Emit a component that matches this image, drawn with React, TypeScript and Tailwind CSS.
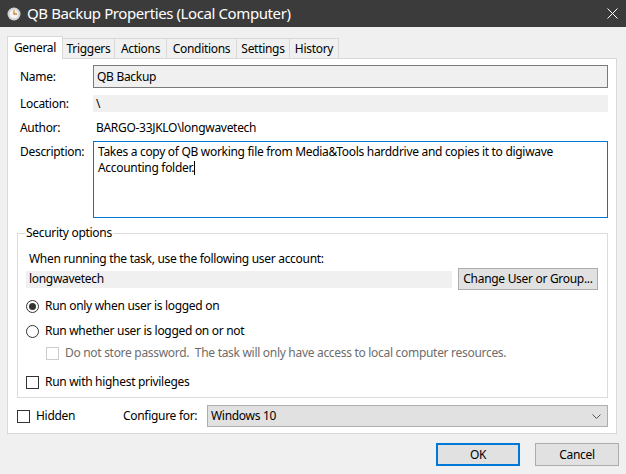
import React from 'react';

const font = { fontFamily: '"Segoe UI", "Noto Sans", sans-serif' };

const tabs = ['General', 'Triggers', 'Actions', 'Conditions', 'Settings', 'History'];
const tabWidths = ['w-[56px]', 'w-[52px]', 'w-[52px]', 'w-[70px]', 'w-[53px]', 'w-[49px]'];

const Radio = ({ checked }: { checked: boolean }) => (
  <span className="w-[13px] h-[13px] rounded-full border border-[#333333] bg-white flex items-center justify-center shrink-0">
    {checked ? <span className="w-[7px] h-[7px] rounded-full bg-[#333333]"></span> : <></>}
  </span>
);

const Check = ({ disabled }: { disabled?: boolean }) => (
  <span
    className={
      disabled
        ? 'w-[13px] h-[13px] border border-[#cccccc] bg-white shrink-0'
        : 'w-[13px] h-[13px] border border-[#333333] bg-white shrink-0'
    }
  ></span>
);

const App = (): React.ReactElement => {
  return (
    <div
      className="w-[626px] h-[474px] bg-[#f0f0f0] text-[12px] tracking-[-0.3px] text-black overflow-hidden"
      style={font}
    >
      {/* title bar */}
      <div className="h-[27px] bg-[#3b3b3b] flex items-center text-white">
        <svg width="14" height="14" viewBox="0 0 14 14" className="ml-[7px]">
          <circle cx="7" cy="7" r="6.5" fill="#d8d8d8" />
          <circle cx="7" cy="7" r="5" fill="#f4f4f4" stroke="#b8b8b8" strokeWidth="0.6" />
          <path d="M7 3.2 V7 H10" stroke="#c28a2a" strokeWidth="1.3" fill="none" />
        </svg>
        <span className="ml-[6px] text-[15px] leading-none tracking-[-0.4px]">QB Backup Properties (Local Computer)</span>
        <svg width="11" height="11" viewBox="0 0 11 11" className="ml-auto mr-[8px]">
          <path d="M0.5 0.5 L10.5 10.5 M10.5 0.5 L0.5 10.5" stroke="#ffffff" strokeWidth="1" />
        </svg>
      </div>

      <div className="px-[7px] pt-[9px]">
        {/* tabs */}
        <div className="flex items-end h-[22px]">
          {tabs.map((t, i) =>
            i === 0 ? (
              <div
                key={t}
                className={`${tabWidths[i]} h-[23px] -mb-px bg-white border border-b-0 border-[#d9d9d9] flex items-center justify-center relative z-10`}
              >
                {t}
              </div>
            ) : (
              <div
                key={t}
                className={`${tabWidths[i]} h-[20px] bg-[#f0f0f0] border border-b-0 border-l-0 border-[#d9d9d9] flex items-center justify-center pt-[1px]`}
              >
                {t}
              </div>
            ),
          )}
        </div>

        {/* panel */}
        <div className="w-[610px] h-[376px] bg-white border border-[#d9d9d9] pl-[12px] pr-[8px] pt-[6px]">
          <div className="flex items-center h-[23px]">
            <span className="w-[73px]">Name:</span>
            <div className="flex-1 h-[23px] border border-[#7a7a7a] bg-[#f0f0f0] flex items-center pl-[3px]">QB Backup</div>
          </div>
          <div className="flex items-center h-[17px] mt-[7px]">
            <span className="w-[73px]">Location:</span>
            <div className="flex-1 h-[17px] bg-[#f0f0f0] flex items-center pl-[3px]">\</div>
          </div>
          <div className="flex items-center h-[18px] mt-[7px]">
            <span className="w-[73px]">Author:</span>
            <span className="pl-[3px]">BARGO-33JKLO\longwavetech</span>
          </div>
          <div className="flex items-start mt-[4px]">
            <span className="w-[73px] pt-[2px]">Description:</span>
            <div className="flex-1 h-[77px] border border-[#0078d7] px-[4px] pt-[2px] leading-[16px]">
              Takes a copy of QB working file from Media&amp;Tools harddrive and copies it to digiwave Accounting folder.
              <span className="inline-block w-px h-[14px] bg-black align-middle -mt-[2px]"></span>
            </div>
          </div>

          {/* security options */}
          <fieldset className="ml-[-3px] mt-[7px] h-[173px] border border-[#dcdcdc] pl-[8px] pr-[9px]">
            <legend className="ml-[-1px] px-[1px] leading-[16px]">Security options</legend>
            <div className="ml-[3px] mt-[10px] h-[16px] flex items-center">When running the task, use the following user account:</div>
            <div className="flex items-center mt-[1px] h-[22px]">
              <div className="w-[426px] h-[17px] bg-[#f0f0f0] flex items-center pl-[3px]">longwavetech</div>
              <div className="ml-[6px] w-[140px] h-[22px] bg-[#e1e1e1] border border-[#adadad] flex items-center justify-center">
                Change User or Group...
              </div>
            </div>
            <div className="flex items-center gap-[6px] mt-[8px] h-[16px]">
              <Radio checked={true} />
              <span>Run only when user is logged on</span>
            </div>
            <div className="flex items-center gap-[6px] mt-[9px] h-[16px]">
              <Radio checked={false} />
              <span>Run whether user is logged on or not</span>
            </div>
            <div className="flex items-center gap-[6px] mt-[6px] h-[16px] ml-[20px] text-[#6d6d6d]">
              <Check disabled />
              <span className="whitespace-pre">Do not store password.  The task will only have access to local computer resources.</span>
            </div>
            <div className="flex items-center gap-[6px] mt-[13px] h-[16px]">
              <Check />
              <span>Run with highest privileges</span>
            </div>
          </fieldset>

          <div className="flex items-center h-[22px] mt-[7px] ml-[-3px]">
            <Check />
            <span className="ml-[6px] w-[87px]">Hidden</span>
            <span className="w-[84px]">Configure for:</span>
            <div className="flex-1 h-[22px] bg-[#e1e1e1] border border-[#adadad] flex items-center pl-[3px] pr-[6px]">
              <span>Windows 10</span>
              <svg width="9" height="5" viewBox="0 0 9 5" className="ml-auto">
                <path d="M0.5 0.5 L4.5 4.5 L8.5 0.5" stroke="#555555" strokeWidth="1" fill="none" />
              </svg>
            </div>
          </div>
        </div>

        {/* buttons */}
        <div className="flex justify-end mt-[9px]">
          <div className="w-[84px] h-[23px] bg-[#e1e1e1] border-2 border-[#0078d7] flex items-center justify-center">OK</div>
          <div className="w-[84px] h-[23px] bg-[#e1e1e1] border border-[#adadad] flex items-center justify-center ml-[15px]">
            Cancel
          </div>
        </div>
      </div>
    </div>
  );
};

export default App;
